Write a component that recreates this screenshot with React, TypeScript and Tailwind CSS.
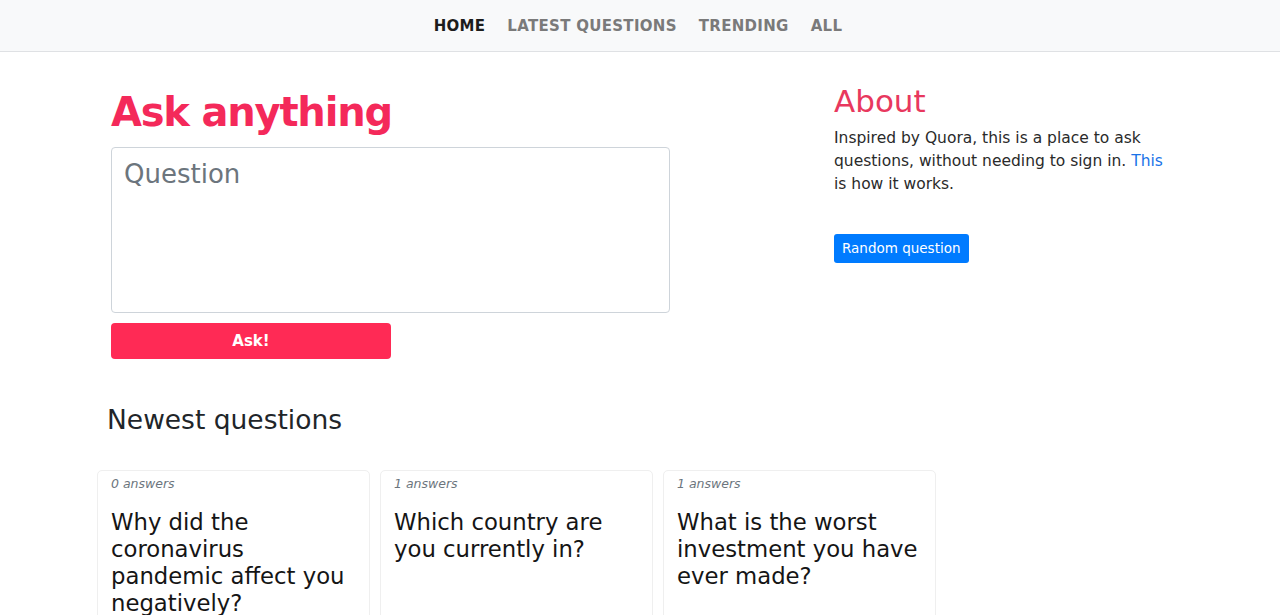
import React from 'react';

const questions = [
  { answers: 0, title: 'Why did the coronavirus pandemic affect you negatively?' },
  { answers: 1, title: 'Which country are you currently in?' },
  { answers: 1, title: 'What is the worst investment you have ever made?' },
];

function Nav() {
  return (
    <nav className="h-[52px] bg-[#f8f9fa] border-b border-[#dfe1e4] flex items-center justify-center">
      <ul className="flex items-center gap-[22px] pt-[1px] pr-[4px] text-[15px] font-bold tracking-[0.3px]">
        <li className="text-[#1c1c1c]">HOME</li>
        <li className="text-[#7a7a7a]">LATEST QUESTIONS</li>
        <li className="text-[#7a7a7a]">TRENDING</li>
        <li className="text-[#7a7a7a]">ALL</li>
      </ul>
    </nav>
  );
}

function QuestionCard({ answers, title }: { answers: number; title: string }) {
  return (
    <div className="w-[273px] h-[160px] border border-[#efefef] rounded-[5px] pl-[13px] pr-[10px] pt-[4px]">
      <div className="text-[12.5px] italic text-[#6c757d]">{answers} answers</div>
      <div className="mt-[15px] text-[22.75px] leading-[27px] text-[#151515]">{title}</div>
    </div>
  );
}

export default function App() {
  return (
    <div className="min-h-screen bg-white text-[#212529] overflow-hidden" style={{ fontFamily: '"DejaVu Sans", Verdana, sans-serif' }}>
      <Nav />
      <div className="flex pl-[111px]">
        <div className="w-[723px]">
          <h1 className="mt-[36px] text-[40px] leading-[48px] font-bold text-[#f4295a] tracking-[-1.2px]">Ask anything</h1>
          <textarea
            placeholder="Question"
            className="mt-[11px] block w-[559px] h-[166px] border border-[#ced4da] rounded-[4px] px-[12px] py-[7px] text-[26px] placeholder:text-[#6c757d] resize-none outline-none"
          />
          <button className="mt-[10px] w-[280px] h-[36px] bg-[#ff2a55] text-white font-bold text-[15px] rounded-[4px]">Ask!</button>
        </div>
        <div className="w-[334px]">
          <h2 className="mt-[30px] text-[31px] leading-[38px] text-[#e8385e]">About</h2>
          <p className="mt-[7px] text-[15.5px] leading-[23px] text-[#2a2a2a]">
            Inspired by Quora, this is a place to ask questions, without needing to sign in.{' '}
            <a className="text-[#1a73e8]">This</a> is how it works.
          </p>
          <button className="mt-[38px] h-[29px] px-[8px] bg-[#007bff] text-white text-[13.5px] rounded-[3px]">Random question</button>
        </div>
      </div>
      <h3 className="ml-[107px] mt-[44px] text-[26.5px] leading-[34px] text-[#212529]">Newest questions</h3>
      <div className="ml-[97px] mt-[33px] flex gap-[10px]">
        {questions.map((q, i) => (
          <QuestionCard key={i} answers={q.answers} title={q.title} />
        ))}
      </div>
    </div>
  );
}
